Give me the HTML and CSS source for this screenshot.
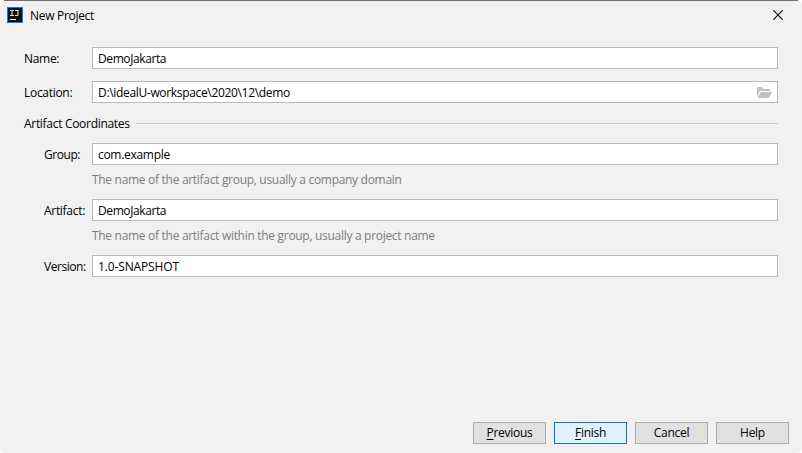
FILE: index.html
```html
<!DOCTYPE html>
<html lang="en">
<head>
<meta charset="utf-8">
<title>New Project</title>
<link rel="stylesheet" href="styles.css">
</head>
<body>
<div class="dialog">
  <header class="titlebar">
    <svg class="logo" width="16" height="16" viewBox="0 0 16 16">
      <rect x=".5" y=".5" width="15" height="15" fill="#111" stroke="#087cfa"/>
      <path d="M3 3.500h4M5 3.500v5M3 8.500h4M8 3.500h3v4q0 1-1 1H8" fill="none" stroke="#ddd" stroke-width="1.100"/>
      <path d="M3 12.500h6" stroke="#fff"/>
    </svg>
    <h1 class="title">New Project</h1>
    <svg class="close" width="10" height="10" viewBox="0 0 10 10">
      <path d="M.3.3l9.400 9.400M9.700.3L.3 9.700" stroke="#111" stroke-width="1.200"/>
    </svg>
  </header>
  <main class="form">
    <div class="row"><label class="label">Name:</label><div class="field field-demo">DemoJakarta</div></div>
    <div class="row location"><label class="label">Location:</label>
      <div class="field field-path"><span>D:\idealU-workspace\2020\12\demo</span>
        <svg class="folder" width="15" height="11" viewBox="0 0 15 11">
          <path d="M0 0h5l1.500 2H13v2H3.200L0 9.500z" fill="#bcc2c6"/>
          <path d="M3.700 5H15l-3 6H.5z" fill="#bcc2c6"/>
        </svg>
      </div>
    </div>
    <div class="section"><span>Artifact Coordinates</span></div>
    <div class="row nested"><label class="label label-tight">Group:</label><div class="field">com.example</div></div>
    <p class="hint">The name of the artifact group, usually a company domain</p>
    <div class="row nested"><label class="label">Artifact:</label><div class="field field-demo">DemoJakarta</div></div>
    <p class="hint">The name of the artifact within the group, usually a project name</p>
    <div class="row nested"><label class="label label-tight">Version:</label><div class="field field-version">1.0-SNAPSHOT</div></div>
  </main>
  <footer class="actions">
    <button class="btn"><u>P</u>revious</button>
    <button class="btn primary"><u>F</u>inish</button>
    <button class="btn">Cancel</button>
    <button class="btn">Help</button>
  </footer>
</div>
</body>
</html>
```
FILE: styles.css
```css
* { box-sizing: border-box; }
body { margin: 0; background: #fff; overflow: hidden; font: 12px/20px "Open Sans", "Noto Sans", sans-serif; letter-spacing: -0.3px; color: #000; }
.dialog { position: relative; width: 802px; height: 453px; display: flex; flex-direction: column; background: #f1f1f1; border-radius: 5px; padding-bottom: 9px; }
.dialog::before { content: ""; position: absolute; top: 0; left: 4px; right: 4px; height: 1px; background: #706e70; }
.titlebar { height: 47px; padding: 7px 19px 0 7px; display: flex; align-items: flex-start; }
.logo { flex: none; }
.title { margin: -1px 0 0 7px; font: inherit; flex: 1; }
.close { margin-top: 3px; }
.form { flex: 1; padding: 0 24px; }
.row { display: flex; height: 22px; }
.location { margin-top: 12px; }
.label { width: 68px; flex: none; line-height: 24px; white-space: nowrap; }
.nested { padding-left: 20px; }
.nested .label { width: 48px; }
.nested .label-tight { letter-spacing: -0.45px; }
.field { flex: 1; display: flex; align-items: center; justify-content: space-between; padding: 1px 5px 0; border: 1px solid #bababa; background: #fff; white-space: nowrap; }
.field-demo { letter-spacing: -0.4px; }
.field-path { letter-spacing: -0.33px; }
.field-version { letter-spacing: -0.13px; }
.section { height: 40px; padding-top: 11px; display: flex; align-items: flex-start; }
.section::after { content: ""; flex: 1; height: 1px; margin: 9px 0 0 6px; background: #cdcdcd; }
.hint { height: 34px; margin: 0 0 0 68px; padding-top: 5px; color: #7d7d7d; white-space: nowrap; }
.actions { display: flex; justify-content: flex-end; gap: 8px; padding-right: 13px; }
.btn { width: 73px; height: 22px; padding: 0; border: 1px solid #adadad; background: #e1e1e1; color: #000; font: inherit; letter-spacing: inherit; line-height: 20px; }
.btn u { text-underline-offset: 2px; text-decoration-thickness: 1px; }
.primary { border-color: #0078d7; background: #e3f1fb; }
```
